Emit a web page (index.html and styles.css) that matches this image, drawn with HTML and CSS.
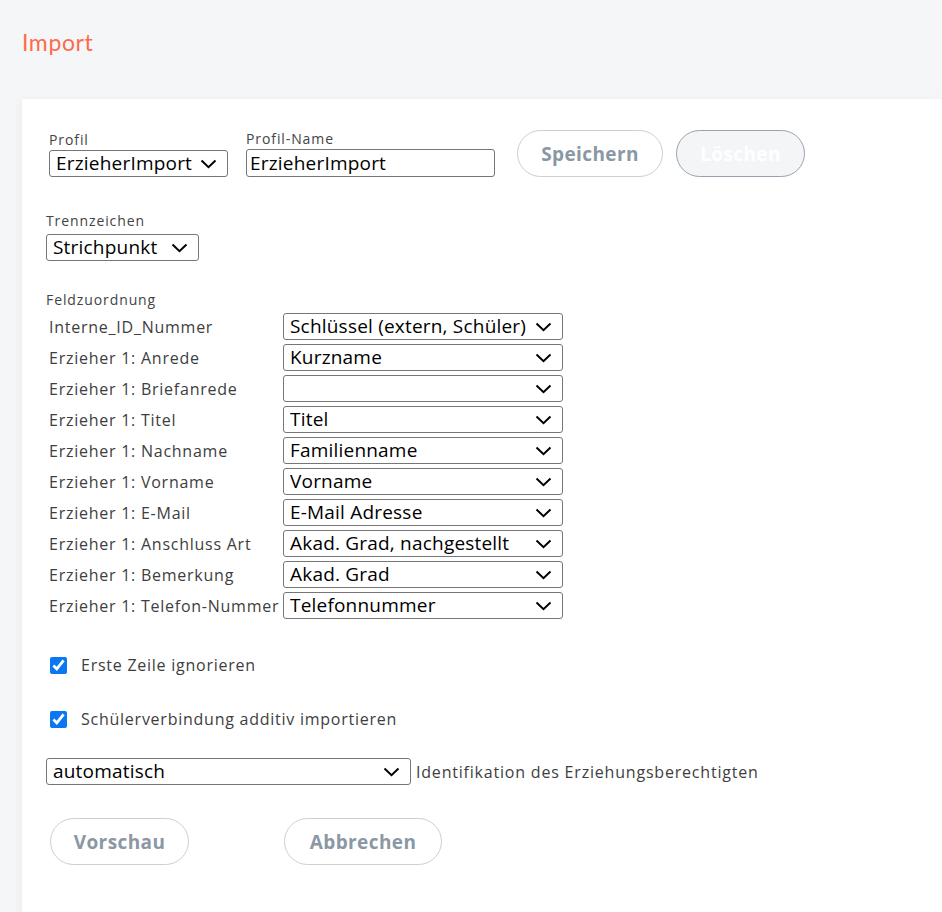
FILE: index.html
```html
<!DOCTYPE html>
<html lang="de">
<head>
<meta charset="utf-8">
<title>Import</title>
<link rel="stylesheet" href="styles.css">
</head>
<body>
<header class="page-head">
  <h1 class="page-title">Import</h1>
</header>
<main class="card">
  <div class="top-row">
    <div class="field">
      <label class="lbl">Profil</label>
      <select class="sel sel-profil"><option>ErzieherImport</option></select>
    </div>
    <div class="field field-name">
      <label class="lbl">Profil-Name</label>
      <input class="txt" type="text" value="ErzieherImport">
    </div>
    <button class="btn btn-save">Speichern</button>
    <button class="btn btn-disabled" disabled>Löschen</button>
  </div>

  <div class="field field-sep">
    <label class="lbl lbl-sep">Trennzeichen</label>
    <select class="sel sel-sep"><option>Strichpunkt</option></select>
  </div>

  <section class="mapping">
    <div class="lbl mapping-title">Feldzuordnung</div>
    <div class="map-grid">
      <span class="map-lbl">Interne_ID_Nummer</span>
      <select class="sel sel-map"><option>Schlüssel (extern, Schüler)</option></select>
      <span class="map-lbl">Erzieher 1: Anrede</span>
      <select class="sel sel-map"><option>Kurzname</option></select>
      <span class="map-lbl">Erzieher 1: Briefanrede</span>
      <select class="sel sel-map"><option></option></select>
      <span class="map-lbl">Erzieher 1: Titel</span>
      <select class="sel sel-map"><option>Titel</option></select>
      <span class="map-lbl">Erzieher 1: Nachname</span>
      <select class="sel sel-map"><option>Familienname</option></select>
      <span class="map-lbl">Erzieher 1: Vorname</span>
      <select class="sel sel-map"><option>Vorname</option></select>
      <span class="map-lbl">Erzieher 1: E-Mail</span>
      <select class="sel sel-map"><option>E-Mail Adresse</option></select>
      <span class="map-lbl">Erzieher 1: Anschluss Art</span>
      <select class="sel sel-map"><option>Akad. Grad, nachgestellt</option></select>
      <span class="map-lbl">Erzieher 1: Bemerkung</span>
      <select class="sel sel-map"><option>Akad. Grad</option></select>
      <span class="map-lbl">Erzieher 1: Telefon-Nummer</span>
      <select class="sel sel-map"><option>Telefonnummer</option></select>
    </div>
  </section>

  <label class="check check-first"><input type="checkbox" checked><span>Erste Zeile ignorieren</span></label>
  <label class="check check-second"><input type="checkbox" checked><span>Schülerverbindung additiv importieren</span></label>

  <div class="ident-row">
    <select class="sel sel-ident"><option>automatisch</option></select>
    <span class="ident-lbl">Identifikation des Erziehungsberechtigten</span>
  </div>

  <div class="bottom-row">
    <button class="btn btn-preview">Vorschau</button>
    <button class="btn btn-cancel">Abbrechen</button>
  </div>
</main>
</body>
</html>
```
FILE: styles.css
```css
html, body {
  margin: 0;
  padding: 0;
  background: #f5f6f8;
  height: 100%;
  overflow: hidden;
}
body {
  font-family: "Open Sans", "Lato", sans-serif;
  color: #3e3e3e;
}
.page-head {
  height: 99px;
  padding-left: 22px;
  box-sizing: border-box;
}
.page-title {
  margin: 0;
  padding-top: 27px;
  font-family: "Lato", sans-serif;
  font-size: 23px;
  line-height: 30px;
  font-weight: 400;
  color: #fd6b4b;
  letter-spacing: 0.6px;
}
.card {
  margin-left: 22px;
  background: #fff;
  min-height: 900px;
  padding: 31px 0 0 27px;
  box-sizing: border-box;
  box-shadow: -3px 0 8px rgba(0,0,0,0.035);
}
.top-row {
  display: flex;
  align-items: flex-end;
}
.field {
  display: flex;
  flex-direction: column;
}
.field-name {
  margin-left: 18px;
}
.lbl {
  font-size: 14px;
  line-height: 18px;
  letter-spacing: 0.9px;
  margin-bottom: 1px;
  color: #444;
}
.lbl-sep {
  margin-bottom: 4px;
}
.sel {
  -webkit-appearance: none;
  appearance: none;
  font-family: "Open Sans", "Noto Sans", sans-serif;
  font-size: 19px;
  letter-spacing: 0.2px;
  color: #000;
  height: 27px;
  border: 1px solid #767676;
  border-radius: 3px;
  background: #fff url("data:image/svg+xml,%3Csvg xmlns='http://www.w3.org/2000/svg' width='17' height='10' viewBox='0 0 17 10'%3E%3Cpath d='M1.5 1.5 L8.5 8.2 L15.5 1.5' fill='none' stroke='%23000' stroke-width='2'/%3E%3C/svg%3E") no-repeat right 10px center;
  padding: 0 34px 0 6px;
  line-height: 25px;
  box-sizing: border-box;
  margin: 0;
}
.sel-profil { width: 179px; }
.txt {
  font-family: "Open Sans", "Noto Sans", sans-serif;
  font-size: 19px;
  letter-spacing: 0.2px;
  color: #000;
  width: 249px;
  height: 28px;
  border: 1px solid #767676;
  border-radius: 3px;
  padding: 0 3px;
  box-sizing: border-box;
  margin: 0;
}
.btn {
  font-family: "Open Sans", "Lato", sans-serif;
  font-weight: 700;
  font-size: 19px;
  letter-spacing: 0.4px;
  height: 47px;
  border-radius: 24px;
  background: #fff;
  border: 1px solid #c8d0d8;
  color: #8b97a4;
  padding: 0;
  box-sizing: border-box;
}
.btn-save {
  width: 146px;
  margin-left: 22px;
}
.btn-disabled {
  width: 129px;
  margin-left: 13px;
  background: #f4f5f7;
  border-color: #9aa3ad;
  color: #ffffff;
}
.field-sep {
  margin-top: 35px;
  margin-left: -3px;
}
.sel-sep { width: 153px; }
.mapping {
  margin-top: 30px;
  margin-left: -3px;
}
.mapping-title {
  margin-bottom: 4px;
}
.map-grid {
  display: grid;
  grid-template-columns: 234px 280px;
  row-gap: 4px;
  align-items: center;
  padding-left: 3px;
}
.map-lbl {
  font-size: 16px;
  letter-spacing: 0.75px;
  white-space: nowrap;
  color: #3e3e3e;
}
.sel-map { width: 280px; }
.check {
  display: flex;
  align-items: center;
  font-size: 16px;
  line-height: 20px;
  letter-spacing: 0.75px;
  color: #3e3e3e;
}
.check input {
  width: 17px;
  height: 17px;
  margin: 0 14px 0 1px;
  accent-color: #0b77f2;
}
.check-first { margin-top: 36px; }
.check-second { margin-top: 34px; }
.ident-row {
  display: flex;
  align-items: center;
  margin-top: 29px;
  margin-left: -3px;
}
.sel-ident { width: 365px; }
.ident-lbl {
  font-size: 16px;
  letter-spacing: 0.8px;
  margin-left: 5px;
  color: #3e3e3e;
}
.bottom-row {
  display: flex;
  margin-top: 33px;
  margin-left: 1px;
}
.btn-preview { width: 139px; }
.btn-cancel { width: 158px; margin-left: 95px; }
```
